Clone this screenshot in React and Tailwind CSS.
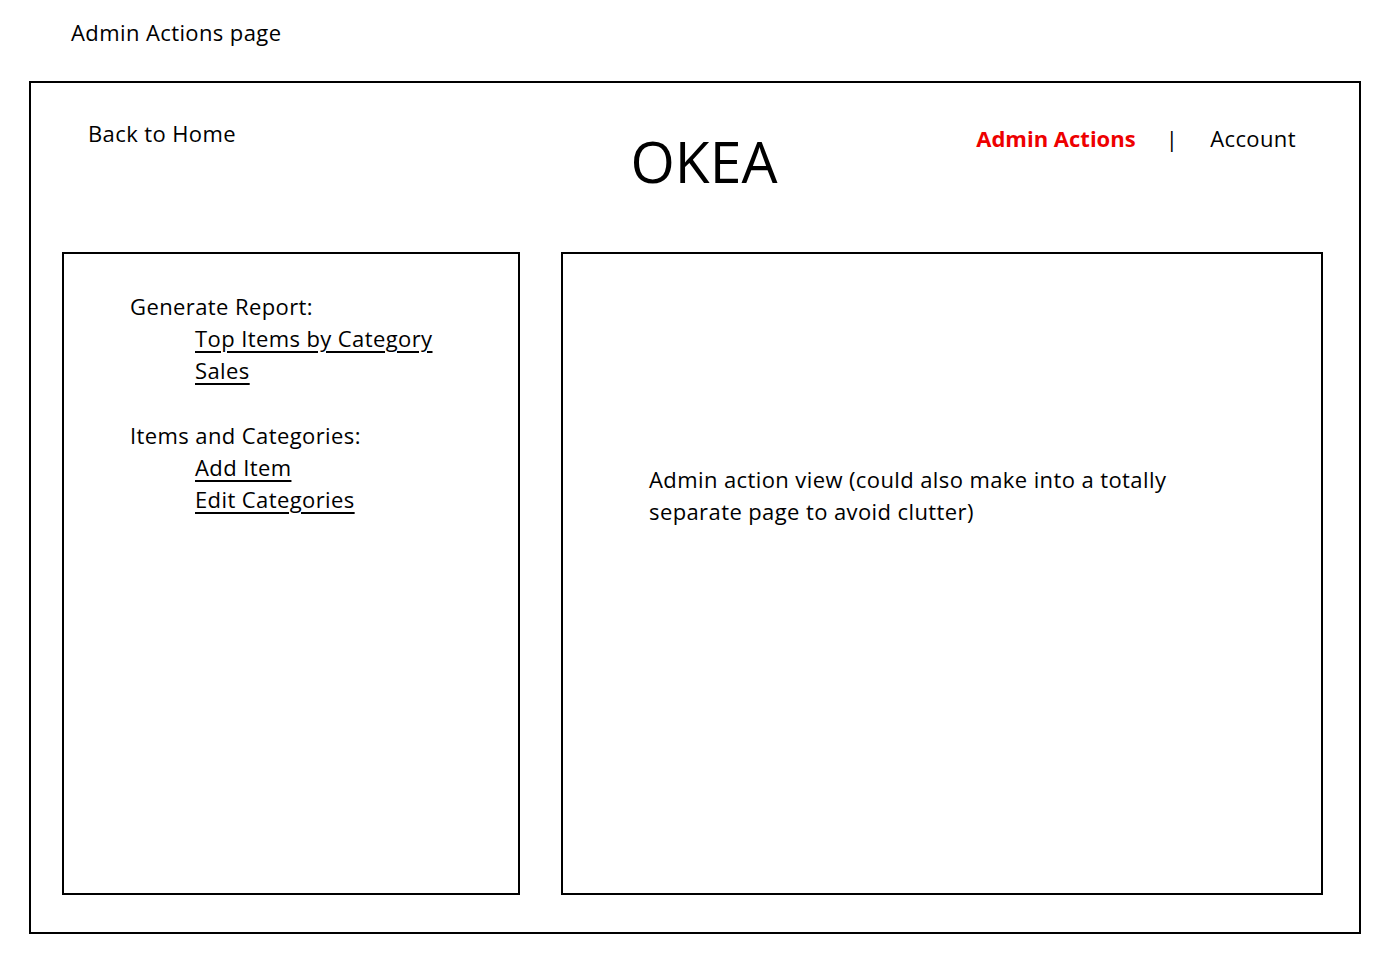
import React from 'react';

const font = { fontFamily: '"Open Sans", "Liberation Sans", sans-serif' };

const Section = ({ title, links }) => (
  <div>
    <p className="leading-[32px]">{title}</p>
    {links.map((l) => (
      <a key={l} href="#" className="block w-fit ml-[65px] leading-[32px] underline decoration-[1.5px] underline-offset-[4px] text-black">
        {l}
      </a>
    ))}
  </div>
);

export default function App() {
  return (
    <div className="bg-white min-h-[974px] w-[1399px] text-black text-[22px] tracking-[0.4px]" style={font}>
      {/* page label */}
      <div className="pl-[71px] pt-[17px] h-[81px] leading-[30px]">Admin Actions page</div>

      <div className="ml-[29px] w-[1332px] h-[853px] border-2 border-black flex flex-col">
        {/* Header */}
        <div className="h-[169px] flex items-start">
          <div className="w-[400px] pl-[57px] pt-[35px] leading-[30px]">Back to Home</div>
          <div className="flex-1 text-center pt-[38px]">
            <span className="inline-block text-[57px] leading-[80px] tracking-normal ml-[18px]">OKEA</span>
          </div>
          <div className="w-[400px] flex justify-end items-center pr-[63px] pt-[40px] leading-[30px]">
            <span className="font-bold text-[#ee0000] tracking-normal">Admin Actions</span>
            <span className="ml-[30px] mr-[32px]">|</span>
            <span>Account</span>
          </div>
        </div>

        {/* Panels */}
        <div className="flex gap-[41px] pl-[31px]">
          <div className="w-[458px] h-[643px] border-2 border-black pl-[66px] pt-[36px]">
            <Section title="Generate Report:" links={['Top Items by Category', 'Sales']} />
            <div className="h-[33px]" />
            <Section title="Items and Categories:" links={['Add Item', 'Edit Categories']} />
          </div>
          <div className="w-[762px] h-[643px] border-2 border-black pl-[86px] pt-[209px]">
            <p className="leading-[32px] w-[545px]">
              Admin action view (could also make into a totally separate page to avoid clutter)
            </p>
          </div>
        </div>
      </div>
    </div>
  );
}
